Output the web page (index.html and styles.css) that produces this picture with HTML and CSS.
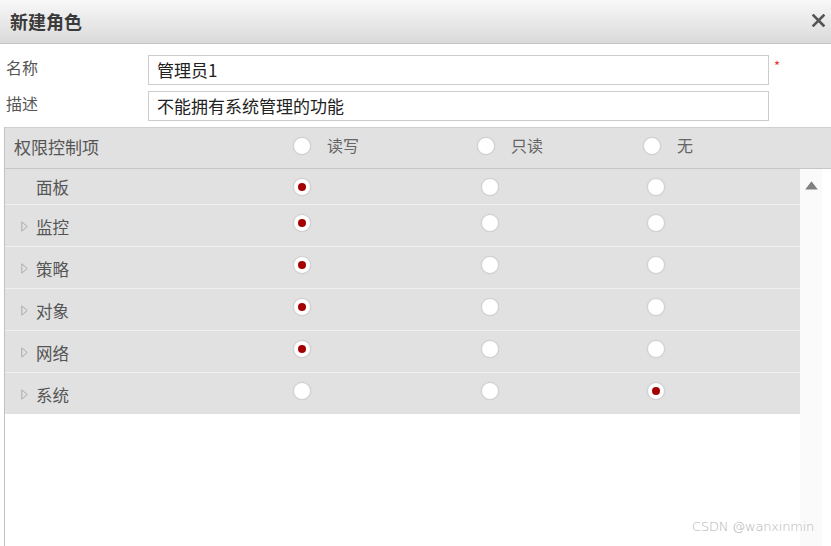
FILE: index.html
```html
<!DOCTYPE html>
<html lang="zh">
<head>
<meta charset="utf-8">
<title>新建角色</title>
<link rel="stylesheet" href="styles.css">
</head>
<body>
<div class="dialog">
  <div class="titlebar">
    <span class="title">新建角色</span>
    <svg class="close" width="13" height="13" viewBox="0 0 13 13"><path d="M1.5 1.5 L11.5 11.5 M11.5 1.5 L1.5 11.5" stroke="#555" stroke-width="2.6" stroke-linecap="square"/></svg>
  </div>
  <div class="form">
    <div class="field">
      <label class="flabel">名称</label>
      <div class="input">管理员1</div>
      <span class="req">*</span>
    </div>
    <div class="field">
      <label class="flabel">描述</label>
      <div class="input">不能拥有系统管理的功能</div>
    </div>
  </div>
  <div class="perm">
    <div class="phead">
      <span class="pname">权限控制项</span>
      <span class="hopt"><span class="radio"></span><span class="hlabel">读写</span></span>
      <span class="hopt"><span class="radio"></span><span class="hlabel">只读</span></span>
      <span class="hopt"><span class="radio"></span><span class="hlabel">无</span></span>
    </div>
    <div class="pbody">
      <div class="rows">
        <div class="row first">
          <span class="rname"><span class="tri-space"></span>面板</span>
          <span class="cell"><span class="radio on"></span></span>
          <span class="cell"><span class="radio"></span></span>
          <span class="cell"><span class="radio"></span></span>
        </div>
        <div class="row">
          <span class="rname"><svg class="tri" width="7" height="11" viewBox="0 0 7 11"><path d="M0.8 0.8 L6.2 5.5 L0.8 10.2 Z" fill="none" stroke="#aaa" stroke-width="1"/></svg>监控</span>
          <span class="cell"><span class="radio on"></span></span>
          <span class="cell"><span class="radio"></span></span>
          <span class="cell"><span class="radio"></span></span>
        </div>
        <div class="row">
          <span class="rname"><svg class="tri" width="7" height="11" viewBox="0 0 7 11"><path d="M0.8 0.8 L6.2 5.5 L0.8 10.2 Z" fill="none" stroke="#aaa" stroke-width="1"/></svg>策略</span>
          <span class="cell"><span class="radio on"></span></span>
          <span class="cell"><span class="radio"></span></span>
          <span class="cell"><span class="radio"></span></span>
        </div>
        <div class="row">
          <span class="rname"><svg class="tri" width="7" height="11" viewBox="0 0 7 11"><path d="M0.8 0.8 L6.2 5.5 L0.8 10.2 Z" fill="none" stroke="#aaa" stroke-width="1"/></svg>对象</span>
          <span class="cell"><span class="radio on"></span></span>
          <span class="cell"><span class="radio"></span></span>
          <span class="cell"><span class="radio"></span></span>
        </div>
        <div class="row">
          <span class="rname"><svg class="tri" width="7" height="11" viewBox="0 0 7 11"><path d="M0.8 0.8 L6.2 5.5 L0.8 10.2 Z" fill="none" stroke="#aaa" stroke-width="1"/></svg>网络</span>
          <span class="cell"><span class="radio on"></span></span>
          <span class="cell"><span class="radio"></span></span>
          <span class="cell"><span class="radio"></span></span>
        </div>
        <div class="row last">
          <span class="rname"><svg class="tri" width="7" height="11" viewBox="0 0 7 11"><path d="M0.8 0.8 L6.2 5.5 L0.8 10.2 Z" fill="none" stroke="#aaa" stroke-width="1"/></svg>系统</span>
          <span class="cell"><span class="radio"></span></span>
          <span class="cell"><span class="radio"></span></span>
          <span class="cell"><span class="radio on"></span></span>
        </div>
      </div>
      <div class="scrollbar">
        <svg class="up" width="13" height="9" viewBox="0 0 13 9"><path d="M6.5 0.3 L12.8 8.6 L0.2 8.6 Z" fill="#808080"/></svg>
      </div>
      <div class="rest"></div>
    </div>
  </div>
  <div class="watermark">CSDN @wanxinmin</div>
</div>
</body>
</html>
```

FILE: styles.css
```css
html, body {
  margin: 0;
  padding: 0;
  background: #ffffff;
}
body {
  width: 831px;
  height: 546px;
  overflow: hidden;
  font-family: "Noto Sans CJK SC", "Liberation Sans", sans-serif;
  color: #555;
}
.dialog {
  position: relative;
  width: 831px;
  height: 546px;
  display: flex;
  flex-direction: column;
}
.titlebar {
  height: 43px;
  flex: none;
  display: flex;
  align-items: center;
  justify-content: space-between;
  padding: 0 6px 0 10px;
  background: linear-gradient(#f8f8f8, #dadada);
  border-bottom: 1px solid #c4c4c4;
}
.title {
  font-size: 18px;
  font-weight: bold;
  color: #3a3a3a;
  line-height: 24px;
  margin-top: -1px;
}
.close {
  display: block;
  margin-top: -2px;
}
.form {
  padding-top: 11px;
  display: flex;
  flex-direction: column;
  gap: 6px;
  flex: none;
}
.field {
  display: flex;
  align-items: flex-start;
}
.flabel {
  width: 142px;
  padding-left: 6px;
  font-size: 16px;
  line-height: 22px;
  margin-top: 1px;
  color: #555;
}
.input {
  width: 611px;
  height: 28px;
  border: 1px solid #cccccc;
  padding-left: 8px;
  font-size: 17px;
  line-height: 28px;
  color: #222;
  background: #fff;
}
.req {
  color: #e33;
  font-size: 13px;
  margin-left: 5px;
  line-height: 18px;
  margin-top: 2px;
}
.perm {
  margin-top: 6px;
  margin-left: 4px;
  border-left: 1px solid #c2c2c2;
  flex: 1;
  display: flex;
  flex-direction: column;
}
.phead {
  height: 40px;
  border-top: 1px solid #cfcfcf;
  border-bottom: 1px solid #c6c6c6;
  background: #e1e1e1;
  display: grid;
  grid-template-columns: 288px 184px 166px 1fr;
  align-items: center;
  flex: none;
}
.pname {
  padding-left: 9px;
  font-size: 17px;
  color: #555;
  line-height: 22px;
  margin-top: -3px;
}
.hopt {
  display: flex;
  align-items: center;
  margin-top: -4px;
}
.hlabel {
  margin-left: 16px;
  font-size: 16px;
  color: #666;
  line-height: 22px;
  margin-top: -2px;
}
.radio {
  display: block;
  width: 18px;
  height: 18px;
  box-sizing: border-box;
  border-radius: 50%;
  background: #ffffff;
  border: 1px solid #d2d2d2;
  box-shadow: 0 0 1px rgba(0,0,0,0.15);
  position: relative;
  flex: none;
}
.radio.on::after {
  content: "";
  position: absolute;
  left: 4px;
  top: 4px;
  width: 8px;
  height: 8px;
  border-radius: 50%;
  background: #a50000;
}
.pbody {
  flex: 1;
  display: flex;
}
.rows {
  width: 795px;
  flex: none;
  align-self: flex-start;
}
.row {
  display: grid;
  grid-template-columns: 288px 188px 166px 1fr;
  align-items: start;
  height: 41px;
  background: #e1e1e1;
  border-bottom: 1px solid #f0f0f0;
}
.row.first {
  height: 35px;
  align-items: center;
}
.row.last {
  border-bottom: none;
}
.rname {
  display: flex;
  align-items: center;
  padding-left: 16px;
  font-size: 16.5px;
  line-height: 20px;
  color: #555;
  margin-top: 12px;
}
.row.first .rname {
  margin-top: 0;
}
.tri {
  display: block;
  margin-right: 8px;
  margin-top: -1px;
}
.tri-space {
  display: block;
  width: 15px;
  height: 1px;
}
.cell {
  margin-top: 9px;
}
.row.first .cell {
  margin-top: 0;
}
.scrollbar {
  width: 22px;
  flex: none;
  background: #fafafa;
  display: flex;
  justify-content: center;
  align-items: flex-start;
}
.up {
  display: block;
  margin-top: 12px;
}
.rest {
  flex: 1;
  background: #fff;
}
.watermark {
  position: absolute;
  left: 692px;
  top: 519px;
  font-family: "DejaVu Sans", sans-serif;
  font-size: 13px;
  font-weight: 300;
  color: #b4b4b4;
  letter-spacing: -0.2px;
}
```
